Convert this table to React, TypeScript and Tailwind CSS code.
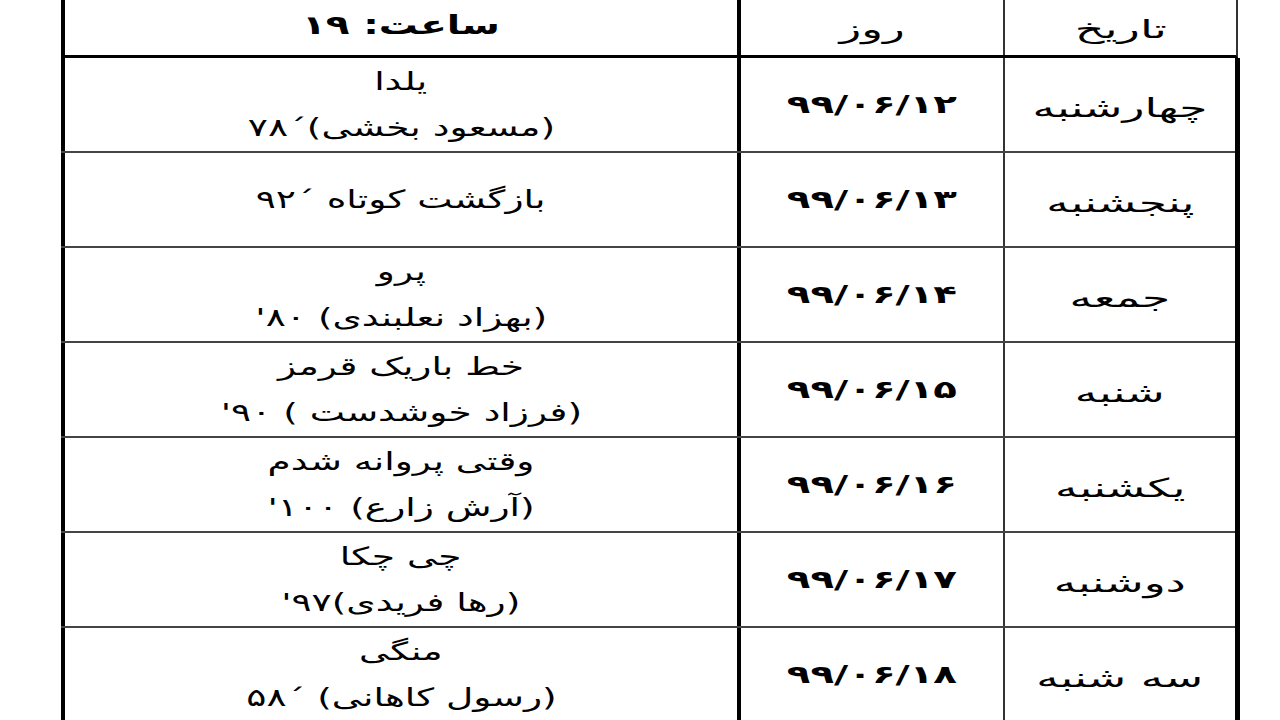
const ROWS = [
  { day: 'چهارشنبه', date: '۹۹/۰۶/۱۲', lines: ['یلدا', '(مسعود بخشی)´۷۸'] },
  { day: 'پنجشنبه', date: '۹۹/۰۶/۱۳', lines: ['بازگشت کوتاه ´۹۲'] },
  { day: 'جمعه', date: '۹۹/۰۶/۱۴', lines: ['پرو', "(بهزاد نعلبندی) ۸۰'"] },
  { day: 'شنبه', date: '۹۹/۰۶/۱۵', lines: ['خط باریک قرمز', "(فرزاد خوشدست ) ۹۰'"] },
  { day: 'یکشنبه', date: '۹۹/۰۶/۱۶', lines: ['وقتی پروانه شدم', "(آرش زارع) ۱۰۰'"] },
  { day: 'دوشنبه', date: '۹۹/۰۶/۱۷', lines: ['چی چکا', "(رها فریدی)۹۷'"] },
  { day: 'سه شنبه', date: '۹۹/۰۶/۱۸', lines: ['منگی', '(رسول کاهانی) ´۵۸'] },
];

export default function App() {
  return (
    <div
      dir="rtl"
      className="h-[720px] w-[1280px] overflow-hidden bg-white text-black"
      style={{ fontFamily: '"DejaVu Sans", sans-serif' }}
    >
      <div className="mr-[40px] w-[1179px]">
        {/* header */}
        <div className="mr-[2px] flex h-[58px] border-r-2 border-b-[3px] border-[#333] border-b-black">
          <div className="flex w-[233px] items-center justify-center border-l-2 border-[#333] pt-1 text-[25px]">
            <span className="inline-block scale-x-[1.85]">تاریخ</span>
          </div>
          <div className="flex w-[266px] items-center justify-center border-l-[4px] border-black pt-1 text-[25px]">
            <span className="inline-block scale-x-[1.8]">روز</span>
          </div>
          <div className="flex flex-1 items-center justify-center border-l-[4px] border-black pb-1 text-[26px] font-bold">
            <span className="inline-block scale-x-[1.5]">ساعت: ۱۹</span>
          </div>
        </div>
        {/* body */}
        <div className="border-r-[5px] border-black">
          {ROWS.map((row) => (
            <div key={row.date} className="flex h-[95px] border-b-2 border-[#444]">
              <div className="flex w-[232px] items-center justify-center border-l-2 border-[#333] pt-2 text-[26px]">
                <span className="inline-block scale-x-[1.75]">{row.day}</span>
              </div>
              <div className="flex w-[266px] items-center justify-center border-l-[4px] border-black text-[25px] font-bold tracking-[2px]">
                <span dir="ltr" className="inline-block scale-x-[1.55]">
                  {row.date}
                </span>
              </div>
              <div className="flex flex-1 flex-col items-center justify-center border-l-[4px] border-black text-[25px] leading-[46px]">
                {row.lines.map((line) => (
                  <div key={line} className="scale-x-[1.5]">
                    {line}
                  </div>
                ))}
              </div>
            </div>
          ))}
        </div>
      </div>
    </div>
  );
}
